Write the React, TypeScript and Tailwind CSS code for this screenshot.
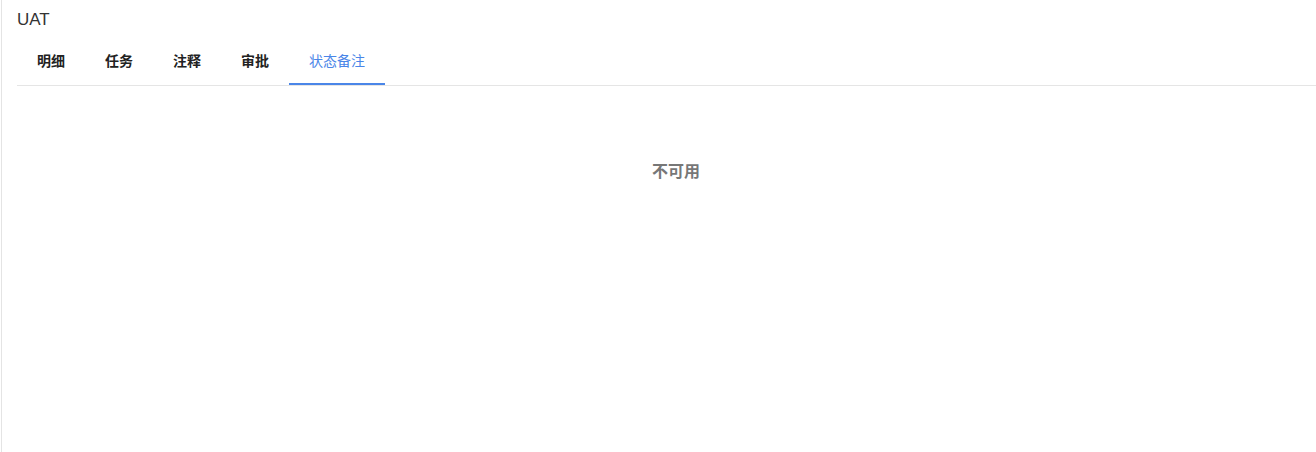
const tabs = ['明细', '任务', '注释', '审批', '状态备注'];

export default function App() {
  const active = 4;

  return (
    <div
      className="ml-px h-[452px] border-l border-[#e4e4e4] bg-white pl-[15px] text-[#333]"
      style={{ fontFamily: '"Liberation Sans", "Noto Sans CJK SC", sans-serif' }}
    >
      <div className="pt-[9px] text-[17px] leading-[22px] text-[#333]">UAT</div>

      <div className="mt-[19px] flex border-b border-[#e5e5e5]">
        {tabs.map((t, i) => (
          <div
            key={t}
            className={
              i === active
                ? 'border-b-2 border-[#4a86e8] px-5 pb-[11px] text-[14px] leading-[22px] text-[#4a86e8]'
                : 'border-b-2 border-transparent px-5 pb-[11px] text-[14px] font-bold leading-[22px] text-[#222]'
            }
          >
            {t}
          </div>
        ))}
      </div>

      <div className="flex justify-center pl-[19px] pt-[75px]">
        <span className="text-[16px] font-bold leading-[22px] text-[#777]">不可用</span>
      </div>
    </div>
  );
}
